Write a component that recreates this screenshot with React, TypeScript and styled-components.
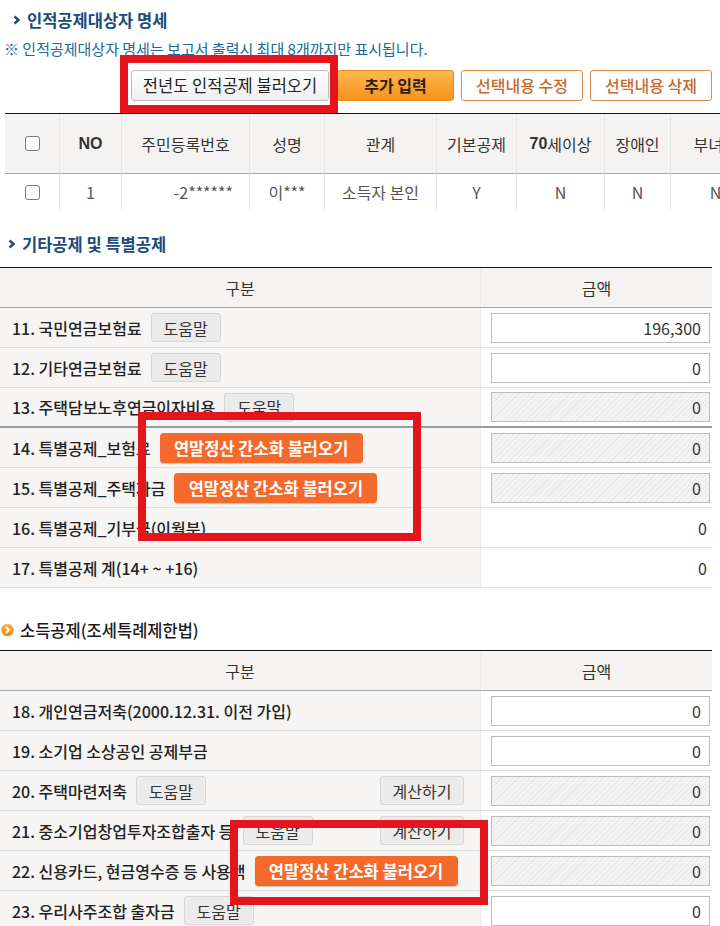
import React from "react";
import styled, { createGlobalStyle } from "styled-components";

const GlobalStyle = createGlobalStyle`
  html, body {
    margin: 0;
    padding: 0;
    background: #fff;
  }
  body {
    font-family: "Noto Sans CJK KR", "Noto Sans", sans-serif;
    color: #333;
  }
  * {
    box-sizing: border-box;
  }
`;

type AmountKind = "input" | "disabled" | "text";

type DeductionRow = {
  label: string;
  help?: boolean;
  load?: boolean;
  calc?: boolean;
  amount: AmountKind;
  value: string;
  thick?: boolean;
};

const otherRows: DeductionRow[] = [
  { label: "11. 국민연금보험료", help: true, amount: "input", value: "196,300" },
  { label: "12. 기타연금보험료", help: true, amount: "input", value: "0" },
  {
    label: "13. 주택담보노후연금이자비용",
    help: true,
    amount: "disabled",
    value: "0",
    thick: true,
  },
  { label: "14. 특별공제_보험료", load: true, amount: "disabled", value: "0" },
  { label: "15. 특별공제_주택자금", load: true, amount: "disabled", value: "0" },
  { label: "16. 특별공제_기부금(이월분)", amount: "text", value: "0" },
  { label: "17. 특별공제 계(14+ ~ +16)", amount: "text", value: "0" },
];

const incomeRows: DeductionRow[] = [
  { label: "18. 개인연금저축(2000.12.31. 이전 가입)", amount: "input", value: "0" },
  { label: "19. 소기업 소상공인 공제부금", amount: "input", value: "0" },
  { label: "20. 주택마련저축", help: true, calc: true, amount: "disabled", value: "0" },
  {
    label: "21. 중소기업창업투자조합출자 등",
    help: true,
    calc: true,
    amount: "disabled",
    value: "0",
  },
  { label: "22. 신용카드, 현금영수증 등 사용액", load: true, amount: "disabled", value: "0" },
  { label: "23. 우리사주조합 출자금", help: true, amount: "input", value: "0" },
];

const personHeaders = [
  "",
  "NO",
  "주민등록번호",
  "성명",
  "관계",
  "기본공제",
  "70세이상",
  "장애인",
  "부녀자",
];

const Chevron = () => (
  <svg width="8" height="10" viewBox="0 0 8 10">
    <path d="M1.5 1.5 L5.5 5 L1.5 8.5" fill="none" stroke="#1b4a7c" strokeWidth="2.4" />
  </svg>
);

const OrangeBullet = () => (
  <svg width="13" height="14" viewBox="0 0 13 14">
    <defs>
      <linearGradient id="ob" x1="0" y1="0" x2="0" y2="1">
        <stop offset="0" stopColor="#fbb34a" />
        <stop offset="1" stopColor="#e8820f" />
      </linearGradient>
    </defs>
    <circle cx="6.5" cy="7" r="6.2" fill="url(#ob)" />
    <path d="M5 4 L8 7 L5 10" fill="none" stroke="#fff" strokeWidth="1.8" />
  </svg>
);

const AmountField = ({ kind, value }: { kind: AmountKind; value: string }) => {
  if (kind === "text") return <PlainAmount>{value}</PlainAmount>;
  return <AmountBox $disabled={kind === "disabled"}>{value}</AmountBox>;
};

const DeductionTable = ({ rows }: { rows: DeductionRow[] }) => (
  <Table>
    <HeadRow>
      <HeadCell>구분</HeadCell>
      <HeadCell>금액</HeadCell>
    </HeadRow>
    {rows.map((row) => (
      <Row key={row.label} $thick={row.thick}>
        <LabelCell>
          <span>{row.label}</span>
          {row.help && <HelpButton>도움말</HelpButton>}
          {row.load && <LoadButton>연말정산 간소화 불러오기</LoadButton>}
          {row.calc && <CalcButton>계산하기</CalcButton>}
        </LabelCell>
        <AmountCell>
          <AmountField kind={row.amount} value={row.value} />
        </AmountCell>
      </Row>
    ))}
  </Table>
);

export default function App() {
  return (
    <>
      <GlobalStyle />
      <Page>
        <SectionTitle $mt={8} $indent={13}>
          <Chevron />
          인적공제대상자 명세
        </SectionTitle>
        <Note>※ 인적공제대상자 명세는 보고서 출력시 최대 8개까지만 표시됩니다.</Note>
        <ButtonRow>
          <GrayButton>전년도 인적공제 불러오기</GrayButton>
          <AddButton>추가 입력</AddButton>
          <OutlineButton>선택내용 수정</OutlineButton>
          <OutlineButton>선택내용 삭제</OutlineButton>
        </ButtonRow>

        <PersonTable>
          {personHeaders.map((h, i) => (
            <PersonHead key={i}>
              {i === 0 ? (
                <CheckBox />
              ) : h === "NO" ? (
                <b>NO</b>
              ) : h === "70세이상" ? (
                <>
                  <b>70</b>세이상
                </>
              ) : (
                h
              )}
            </PersonHead>
          ))}
          <PersonCell>
            <CheckBox />
          </PersonCell>
          <PersonCell>1</PersonCell>
          <PersonCell $right>-2******</PersonCell>
          <PersonCell>이***</PersonCell>
          <PersonCell>소득자 본인</PersonCell>
          <PersonCell>Y</PersonCell>
          <PersonCell>N</PersonCell>
          <PersonCell>N</PersonCell>
          <PersonCell>N</PersonCell>
        </PersonTable>

        <SectionTitle $mt={22} $indent={8}>
          <Chevron />
          기타공제 및 특별공제
        </SectionTitle>
        <TableGap $h={11} />
        <DeductionTable rows={otherRows} />

        <PlainTitle>
          <OrangeBullet />
          소득공제(조세특례제한법)
        </PlainTitle>
        <TableGap $h={8} />
        <DeductionTable rows={incomeRows} />

        <Highlight style={{ left: 120, top: 55, width: 218, height: 58 }} />
        <Highlight style={{ left: 138, top: 412, width: 283, height: 129 }} />
        <Highlight style={{ left: 230, top: 820, width: 258, height: 85 }} />
      </Page>
    </>
  );
}

const Page = styled.div`
  position: relative;
  width: 720px;
  height: 926px;
  overflow: hidden;
  background: #fff;
`;

const SectionTitle = styled.div<{ $mt: number; $indent: number }>`
  display: flex;
  align-items: center;
  gap: 6px;
  height: 24px;
  margin-top: ${(p) => p.$mt}px;
  padding-left: ${(p) => p.$indent}px;
  font-size: 16.5px;
  font-weight: 700;
  color: #1b4a7c;
  line-height: 24px;
`;

const PlainTitle = styled.div`
  display: flex;
  align-items: center;
  gap: 6px;
  height: 24px;
  margin-top: 30px;
  padding-left: 1px;
  font-size: 16.5px;
  font-weight: 500;
  color: #1a1a1a;
  line-height: 24px;
`;

const Note = styled.div`
  margin-top: 8px;
  padding-left: 4px;
  height: 18px;
  font-size: 15px;
  line-height: 18px;
  color: #21699a;
  white-space: nowrap;
`;

const ButtonRow = styled.div`
  display: flex;
  justify-content: flex-end;
  gap: 7px;
  margin-top: 12px;
  padding-right: 8px;
  height: 31px;
`;

const BaseButton = styled.button`
  height: 31px;
  padding: 0;
  font-family: inherit;
  font-size: 16px;
  line-height: 29px;
  border-radius: 3px;
  cursor: pointer;
  white-space: nowrap;
`;

const GrayButton = styled(BaseButton)`
  width: 198px;
  margin-right: 1px;
  background: linear-gradient(#fdfdfd, #efefef);
  border: 1px solid #bdbdbd;
  color: #222;
  font-size: 16.5px;
`;

const AddButton = styled(BaseButton)`
  width: 117px;
  background: linear-gradient(#ffb84e, #f7921c);
  border: 1px solid #eb8a19;
  color: #2d2212;
  font-weight: 700;
`;

const OutlineButton = styled(BaseButton)`
  width: 122px;
  background: #fff;
  border: 1px solid #d58a4e;
  color: #c46a2c;
  font-weight: 500;
`;

const PersonTable = styled.div`
  display: grid;
  grid-template-columns: 55px 62px 128px 75px 112px 80px 88px 66px 90px;
  grid-template-rows: 60px 36px;
  width: 756px;
  margin: 12px 0 0 5px;
  border-top: 1px solid #111;
`;

const PersonHead = styled.div`
  display: flex;
  align-items: center;
  justify-content: center;
  background: #f4f3f2;
  border-right: 1px solid #e6e5e4;
  border-bottom: 1px solid #a5a5a5;
  font-size: 16px;
  color: #333;
  white-space: nowrap;

  b {
    font-weight: 700;
    font-family: "Liberation Sans", sans-serif;
  }
`;

const PersonCell = styled.div<{ $right?: boolean }>`
  display: flex;
  align-items: center;
  justify-content: ${(p) => (p.$right ? "flex-end" : "center")};
  padding-right: ${(p) => (p.$right ? "16px" : "0")};
  border-right: 1px solid #e8e8e8;
  font-size: 16px;
  color: #555;
  white-space: nowrap;
`;

const CheckBox = styled.span`
  display: inline-block;
  width: 15px;
  height: 15px;
  border: 1.5px solid #7a7a7a;
  border-radius: 3px;
  background: #fff;
`;

const TableGap = styled.div<{ $h: number }>`
  height: ${(p) => p.$h}px;
`;

const Table = styled.div`
  width: 712px;
  border-top: 1px solid #111;
`;

const HeadRow = styled.div`
  display: grid;
  grid-template-columns: 481px 231px;
  height: 40px;
  border-bottom: 1px solid #a8a8a8;
  background: #f4f3f2;
`;

const HeadCell = styled.div`
  display: flex;
  align-items: center;
  justify-content: center;
  font-size: 16px;
  color: #333;
  &:first-child {
    border-right: 1px solid #ebeae9;
  }
`;

const Row = styled.div<{ $thick?: boolean }>`
  display: grid;
  grid-template-columns: 481px 231px;
  height: 40px;
  border-bottom: ${(p) => (p.$thick ? "2px solid #9b9b9b" : "1px solid #dedede")};
`;

const LabelCell = styled.div`
  display: flex;
  align-items: center;
  gap: 9px;
  padding: 0 16px 0 12px;
  background: #f6f5f4;
  border-right: 1px solid #ecebea;
  font-size: 16px;
  font-weight: 500;
  color: #222;
  white-space: nowrap;
  overflow: hidden;
`;

const AmountCell = styled.div`
  display: flex;
  align-items: center;
  justify-content: flex-end;
  padding: 0 2px 0 10px;
  background: #fff;
`;

const AmountBox = styled.div<{ $disabled?: boolean }>`
  width: 219px;
  height: 30px;
  padding-right: 8px;
  border: 1px solid #bcbcbc;
  font-size: 16px;
  line-height: 28px;
  text-align: right;
  color: #333;
  background: ${(p) =>
    p.$disabled
      ? "repeating-linear-gradient(135deg, #f3f3f3 0 3px, #e9e9e9 3px 4px)"
      : "#fff"};
`;

const PlainAmount = styled.div`
  padding-right: 3px;
  font-size: 16px;
  color: #333;
`;

const HelpButton = styled.button`
  flex: none;
  width: 70px;
  height: 29px;
  padding: 0;
  background: #ebebeb;
  border: 1px solid #d6d6d6;
  border-radius: 3px;
  font-family: inherit;
  font-size: 16px;
  color: #333;
`;

const CalcButton = styled(HelpButton)`
  width: 84px;
  margin-left: auto;
`;

const LoadButton = styled.button`
  flex: none;
  width: 203px;
  height: 30px;
  padding: 0;
  background: #f4692c;
  border: none;
  border-radius: 4px;
  box-shadow: 0 1px 1px rgba(0, 0, 0, 0.2);
  font-family: inherit;
  font-size: 16.5px;
  font-weight: 700;
  color: #fff;
`;

const Highlight = styled.div`
  position: absolute;
  border: 8px solid #e5141d;
  pointer-events: none;
`;
